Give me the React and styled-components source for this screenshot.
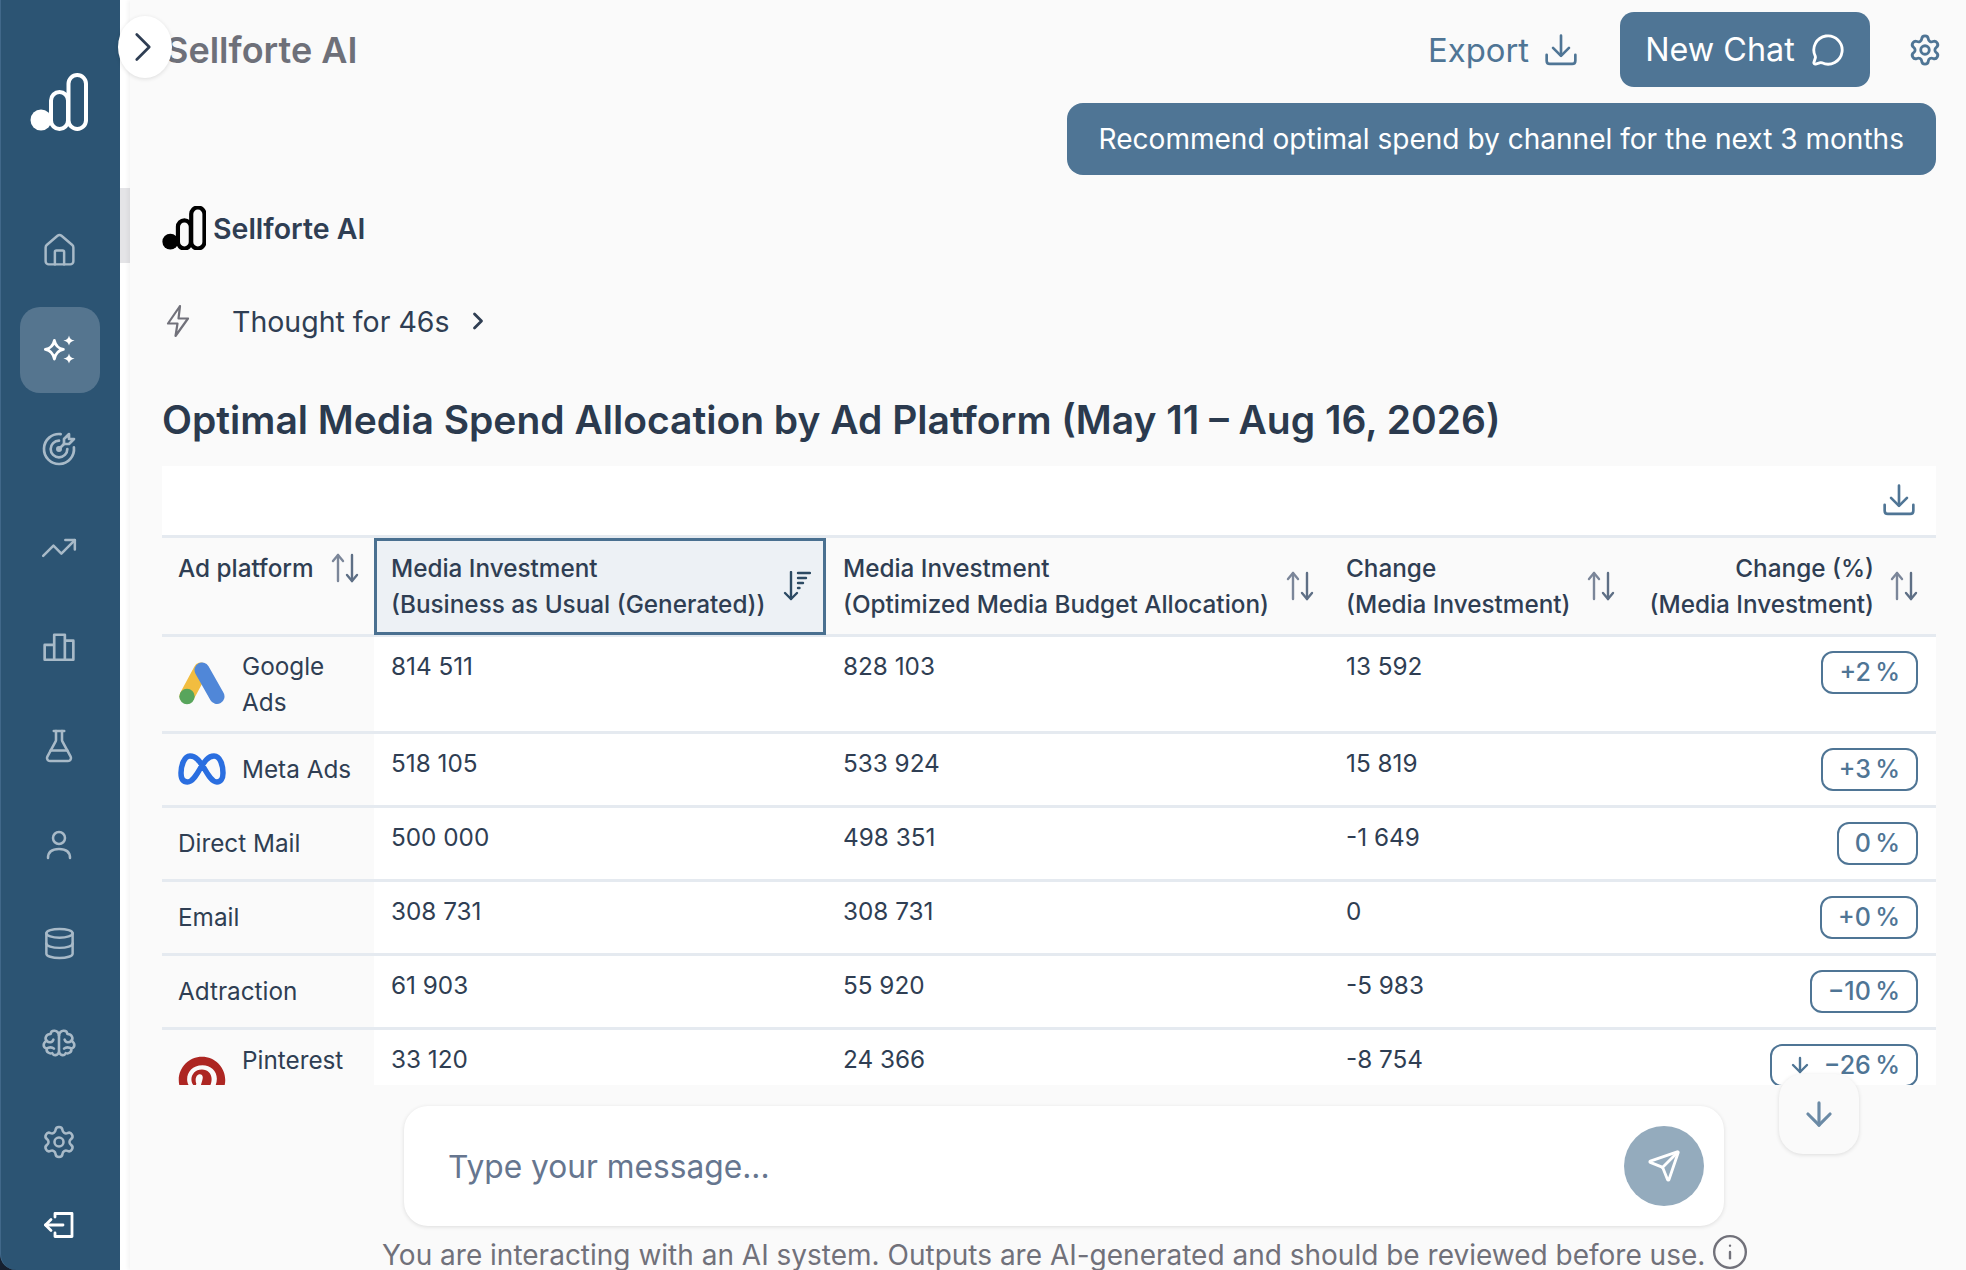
import React from 'react';
import styled, { createGlobalStyle } from 'styled-components';
import {
  House,
  TrendingUp,
  FlaskConical,
  Database,
  Settings,
  MessageCircle,
  Send,
  ChevronRight,
  ArrowDown,
  Info,
} from 'lucide-react';
import { TbTargetArrow } from 'react-icons/tb';
import { FaPinterest } from 'react-icons/fa';

const GlobalStyle = createGlobalStyle`
  html, body {
    margin: 0;
    padding: 0;
    background: #fff;
    font-family: Inter, "Liberation Sans", sans-serif;
  }
  * { box-sizing: border-box; }
`;

const Page = styled.div`
  display: flex;
  width: 1966px;
  height: 1270px;
  overflow: hidden;
  background: #fff;
`;

const SidebarShell = styled.div`
  width: 120px;
  flex-shrink: 0;
  background: #16202f;
`;

const Sidebar = styled.aside`
  display: flex;
  flex-direction: column;
  align-items: center;
  height: 100%;
  padding-top: 73px;
  background: #2c5473;
  border-left: 1px solid #41688a;
  border-bottom-left-radius: 16px;
`;

const SideLogo = styled.div`
  height: 58px;
  margin-bottom: 70px;
  margin-left: -4px;
  color: #fff;
`;

const NavItem = styled.div`
  display: flex;
  align-items: center;
  justify-content: center;
  width: 80px;
  height: ${(p) => (p.$exit ? 68 : 99)}px;
  color: ${(p) => (p.$light ? '#fff' : '#a8bac8')};
  margin-left: ${(p) => (p.$active ? -1 : -3)}px;
`;

const ActiveBox = styled.div`
  display: flex;
  align-items: center;
  justify-content: center;
  width: 80px;
  height: 86px;
  border-radius: 20px;
  background: #55758f;
`;

const Gutter = styled.div`
  width: 10px;
  flex-shrink: 0;
  padding-top: 188px;
`;

const GutterBand = styled.div`
  height: 75px;
  background: #e4e4e7;
`;

const Main = styled.main`
  position: relative;
  flex: 1;
  min-width: 0;
  display: flex;
  flex-direction: column;
  background: #fafafa;
  box-shadow: -2px 0 4px rgba(0, 0, 0, 0.05);
`;

const ToggleButton = styled.button`
  position: absolute;
  left: -12px;
  top: 16px;
  width: 54px;
  height: 62px;
  padding: 0 4px 0 0;
  display: flex;
  align-items: center;
  justify-content: center;
  border: 0;
  border-radius: 50%;
  background: #fff;
  color: #2f3e53;
  box-shadow: 0 1px 4px rgba(0, 0, 0, 0.12);
`;

const Header = styled.header`
  display: flex;
  align-items: center;
  justify-content: space-between;
  height: 87px;
  padding: 12px 24px 0 35px;
  margin-bottom: 16px;
  flex-shrink: 0;
`;

const AppTitle = styled.h1`
  margin: 0;
  font-size: 36px;
  font-weight: 600;
  color: #6e7079;
`;

const HeaderActions = styled.div`
  display: flex;
  align-items: center;
`;

const ExportLink = styled.div`
  display: flex;
  align-items: center;
  gap: 15px;
  margin-right: 42px;
  font-size: 32.8px;
  color: #4f7595;
`;

const NewChatButton = styled.button`
  display: flex;
  align-items: center;
  justify-content: center;
  gap: 16px;
  width: 250px;
  height: 75px;
  border: 0;
  border-radius: 14px;
  background: #4f7595;
  color: #fff;
  font-family: inherit;
  font-size: 32.3px;
  margin-right: 38px;
`;

const GearLink = styled.div`
  display: flex;
  color: #4f7595;
`;

const ChatArea = styled.section`
  flex: 1;
  min-height: 0;
  overflow: hidden;
  padding: 0 30px 0 32px;
`;

const UserBubble = styled.div`
  width: fit-content;
  margin-left: auto;
  height: 72px;
  padding: 0 32px;
  display: flex;
  align-items: center;
  border-radius: 16px;
  background: #4f7595;
  color: #fff;
  font-size: 28.05px;
`;

const AnswerHead = styled.div`
  display: flex;
  align-items: center;
  gap: 7px;
  height: 44px;
  margin-top: 31px;
  color: #000;
  font-size: 28.5px;
  font-weight: 600;
  span {
    color: #2f3e53;
  }
`;

const ThoughtRow = styled.div`
  display: flex;
  align-items: center;
  height: 40px;
  margin-top: 51px;
  color: #2f3e53;
  font-size: 28.5px;
  svg:first-child {
    margin-left: 4px;
    margin-right: 42px;
  }
  svg:last-child {
    margin-left: 14px;
  }
`;

const Heading = styled.h2`
  margin: 47px 0 0 0;
  height: 64px;
  line-height: 64px;
  font-size: 39px;
  font-weight: 600;
  color: #2b3a4e;
`;

const TableCard = styled.div`
  margin-top: 14px;
  background: #fff;
`;

const TableTools = styled.div`
  display: flex;
  align-items: center;
  justify-content: flex-end;
  height: 71.5px;
  padding: 0 20px 0 0;
  color: #4f7595;
  border-bottom: 3px solid #e5eaf0;
`;

const Table = styled.table`
  width: 1774px;
  table-layout: fixed;
  border-collapse: collapse;
  font-size: 24.3px;
  line-height: 36px;
  color: #2f3e53;
`;

const HeadCell = styled.th`
  padding: 12px ${(p) => (p.$last ? 18 : 15)}px 12px ${(p) => (p.$first ? 16 : 17)}px;
  height: 97px;
  vertical-align: top;
  font-weight: 500;
  text-align: ${(p) => (p.$right ? 'right' : 'left')};
  background: ${(p) => (p.$sorted ? '#edf1f5' : '#fafafa')};
  border-bottom: 3px solid #e5eaf0;
  outline: ${(p) => (p.$sorted ? '3px solid #4a7090' : 'none')};
  outline-offset: -3px;
`;

const HeadInner = styled.div`
  display: flex;
  align-items: center;
  justify-content: space-between;
  gap: 16px;
`;

const HeadLabel = styled.div`
  flex: 1;
  white-space: nowrap;
`;

const Row = styled.tr`
  border-bottom: 3px solid #e5eaf0;
`;

const NameCell = styled.td`
  padding: ${(p) => (p.$top ? '12px 12px 0 16px' : '0 12px 0 16px')};
  height: ${(p) => p.$h}px;
  vertical-align: ${(p) => (p.$top ? 'top' : 'middle')};
  background: #fafafa;
`;

const NameInner = styled.div`
  display: flex;
  align-items: ${(p) => (p.$top ? 'flex-start' : 'center')};
  gap: 16px;
`;

const ValueCell = styled.td`
  padding: 11px 16px 0 17px;
  vertical-align: top;
`;

const BadgeCell = styled.td`
  padding: 14px 18px 0 0;
  vertical-align: top;
  text-align: right;
`;

const Badge = styled.span`
  display: inline-flex;
  align-items: center;
  gap: 12px;
  height: 43px;
  padding: 0 16px;
  border: 2px solid #4f7595;
  border-radius: 12px;
  color: #4f7595;
  font-size: 25px;
  font-weight: 500;
`;

const Footer = styled.footer`
  flex-shrink: 0;
  height: 185px;
  padding: 21px 0 0 252px;
`;

const MessageBox = styled.div`
  display: flex;
  align-items: center;
  justify-content: space-between;
  width: 1320px;
  height: 120px;
  margin-left: 22px;
  padding: 0 20px 0 44px;
  border-radius: 24px;
  background: #fff;
  box-shadow: 0 1px 4px rgba(0, 0, 0, 0.12);
`;

const Placeholder = styled.div`
  font-size: 31.7px;
  color: #66768f;
`;

const SendButton = styled.div`
  display: flex;
  align-items: center;
  justify-content: center;
  width: 80px;
  height: 80px;
  border-radius: 50%;
  background: #94abbd;
  color: #fff;
`;

const Disclaimer = styled.div`
  display: flex;
  align-items: center;
  gap: 6px;
  margin-top: 12px;
  font-size: 28px;
  white-space: nowrap;
  color: #71717a;
  svg {
    margin-top: -6px;
  }
`;

const ScrollDown = styled.div`
  position: absolute;
  left: 1649px;
  top: 1074px;
  display: flex;
  align-items: center;
  justify-content: center;
  width: 80px;
  height: 80px;
  border-radius: 24px;
  background: #fafafa;
  color: #6b8aa5;
  box-shadow: 0 1px 4px rgba(0, 0, 0, 0.12);
`;

const BrandMark = ({ size = 58, filled = 'currentColor', stroke = 4 }) => (
  <svg width={size} height={size} viewBox="0 0 58 58" fill="none">
    <circle cx="11" cy="47" r="10.5" fill={filled} />
    <rect x="21" y="19" width="17" height="37" rx="8.5" stroke={filled} strokeWidth={stroke} />
    <rect x="38.500" y="2" width="17.500" height="54" rx="8.700" stroke={filled} strokeWidth={stroke} />
  </svg>
);

const SparkIcon = () => (
  <svg width="36" height="36" viewBox="0 0 32 32">
    <path d="M11 7.500 C12 12 14 14.500 19 15.500 C14 16.500 12 19 11 24 C10 19 8 16.500 3 15.500 C8 14.500 10 12 11 7.500 Z" fill="none" stroke="#fff" strokeWidth="2.500" strokeLinejoin="round" />
    <path d="M24 3 C24.500 5.500 26 7 29 7.500 C26 8 24.500 9.500 24 12 C23.500 9.500 22 8 19 7.500 C22 7 23.500 5.500 24 3 Z" fill="#fff" />
    <path d="M24 19 C24.500 21.500 26 23 29 23.500 C26 24 24.500 25.500 24 28 C23.500 25.500 22 24 19 23.500 C22 23 23.500 21.500 24 19 Z" fill="#fff" />
  </svg>
);

const BoltIcon = () => (
  <svg width="24" height="34" viewBox="0 0 24 34" fill="none" stroke="#71717a" strokeWidth="2.200" strokeLinejoin="round" strokeLinecap="round">
    <path d="M14 2 L2 19.500 H11.500 L9.500 32 L22 14.500 H12.500 Z" />
  </svg>
);

const PodiumIcon = () => (
  <svg width="34" height="34" viewBox="0 0 32 32" fill="none" stroke="currentColor" strokeWidth="2.500" strokeLinejoin="round">
    <path d="M11.500 28 V4.500 H21.500 V28" />
    <path d="M11.500 14 H2.500 V28 H29.500 V10 H21.500" />
  </svg>
);

const PersonIcon = () => (
  <svg width="32" height="32" viewBox="0 0 32 32" fill="none" stroke="currentColor" strokeWidth="2.500" strokeLinecap="round">
    <circle cx="16" cy="9" r="6" />
    <path d="M5 29 C5 23 9 20 16 20 C23 20 27 23 27 29" />
  </svg>
);

const BrainIcon = () => (
  <svg width="36" height="36" viewBox="0 0 32 32" fill="none" stroke="currentColor" strokeWidth="2.300" strokeLinecap="round" strokeLinejoin="round">
    <path d="M16 9 C15 4 9 4 8.500 8 C4.500 8 3 12 5 14 C1.500 16 1.500 20 5 21 C4.500 24 7.500 26 10 25 C11 27.500 15 27.500 16 24 C17 27.500 21 27.500 22 25 C24.500 26 27.500 24 27 21 C30.500 20 30.500 16 27 14 C29 12 27.500 8 23.500 8 C23 4 17 4 16 9 Z" />
    <path d="M16 9 V24" />
    <path d="M5 14 C7 16 10 16 11 13" />
    <path d="M27 14 C25 16 22 16 21 13" />
    <path d="M5 21 C7 19.500 10 19.500 11.500 21" />
    <path d="M27 21 C25 19.500 22 19.500 20.500 21" />
  </svg>
);

const ExitIcon = () => (
  <svg width="34" height="32" viewBox="0 0 32 32" fill="none" stroke="#fff" strokeWidth="2.800" strokeLinecap="round" strokeLinejoin="round">
    <path d="M12 8 V4.500 H29 V27.500 H12 V24" />
    <path d="M20 16 H2.500" />
    <path d="M8 10.500 L2.500 16 L8 21.500" />
  </svg>
);

const TrayDownload = ({ size = 34 }) => (
  <svg width={size} height={size} viewBox="0 0 32 32" fill="none" stroke="currentColor" strokeWidth="2.500" strokeLinecap="round" strokeLinejoin="round">
    <path d="M16 2.500 V21" />
    <path d="M8.500 14 L16 21.500 L23.500 14" />
    <path d="M2.500 20.500 V26 C2.500 28 3.500 29 5.500 29 H26.500 C28.500 29 29.500 28 29.500 26 V20.500" />
  </svg>
);

const SortIcon = () => (
  <svg width="28" height="30" viewBox="0 0 28 30" fill="none" strokeWidth="2.400" strokeLinecap="round" strokeLinejoin="round" style={{ flexShrink: 0 }}>
    <g stroke="#7b8699">
      <path d="M7 28 V2" />
      <path d="M2 8 L7 2 L12 8" />
    </g>
    <g stroke="#5e6f85">
      <path d="M21 2 V28" />
      <path d="M16 22 L21 28 L26 22" />
    </g>
  </svg>
);

const SortedIcon = () => (
  <svg width="28" height="30" viewBox="0 0 28 30" fill="none" stroke="#2c4a63" strokeWidth="2.400" strokeLinecap="round" strokeLinejoin="round" style={{ flexShrink: 0 }}>
    <path d="M8 1 V28" />
    <path d="M2 22 L8 28 L14 22" />
    <path d="M15 2 H27" />
    <path d="M15 7 H23" />
    <path d="M15 12 H20" />
    <path d="M15 17 H16.500" />
  </svg>
);

const GoogleAdsLogo = () => (
  <svg width="48" height="44" viewBox="0 0 48 44" style={{ flexShrink: 0 }}>
    <path d="M9 34 L23 8" stroke="#f2bd40" strokeWidth="15" strokeLinecap="round" fill="none" />
    <path d="M24 8 L39 34.500" stroke="#5087d8" strokeWidth="15" strokeLinecap="round" fill="none" />
    <circle cx="9" cy="34.500" r="7.700" fill="#58a55c" />
  </svg>
);

const MetaLogo = () => (
  <svg width="48" height="34" viewBox="0 0 48 34" fill="none" stroke="#2a6ee0" strokeWidth="5.500" style={{ flexShrink: 0 }}>
    <path d="M12 4 C6 4 3 14 3 21 C3 27 5.500 30 9.500 30 C14.500 30 18.500 23 22.500 16 C26.500 9.500 30 4 36 4 C42.500 4 45 14 45 21 C45 27 42.500 30 39 30 C34 30 30 23 26 16 C21 8.500 18 4 12 4 Z" />
  </svg>
);

const PinterestLogo = styled(FaPinterest)`
  flex-shrink: 0;
  font-size: 48px;
  color: #ad2622;
  margin-top: 14px;
`;

const navIcons = [
  <House key="home" size={37} strokeWidth={1.6} />,
  null,
  <TbTargetArrow key="target" size={40} strokeWidth={1.6} />,
  <TrendingUp key="trend" size={38} strokeWidth={1.6} />,
  <PodiumIcon key="podium" />,
  <FlaskConical key="flask" size={36} strokeWidth={1.7} />,
  <PersonIcon key="person" />,
  <Database key="db" size={35} strokeWidth={1.7} />,
  <BrainIcon key="brain" />,
  <Settings key="settings" size={36} strokeWidth={1.7} />,
];

const rows = [
  { name: 'Google Ads', logo: <GoogleAdsLogo />, h: 97, a: '814 511', b: '828 103', c: '13 592', pct: '+2\u202f%' },
  { name: 'Meta Ads', logo: <MetaLogo />, h: 74, a: '518 105', b: '533 924', c: '15 819', pct: '+3\u202f%' },
  { name: 'Direct Mail', h: 74, a: '500 000', b: '498 351', c: '-1 649', pct: '0\u202f%' },
  { name: 'Email', h: 74, a: '308 731', b: '308 731', c: '0', pct: '+0\u202f%' },
  { name: 'Adtraction', h: 74, a: '61 903', b: '55 920', c: '-5 983', pct: '−10\u202f%' },
  { name: 'Pinterest', logo: <PinterestLogo />, h: 97, top: true, a: '33 120', b: '24 366', c: '-8 754', pct: '−26\u202f%', down: true },
];

const App = () => (
  <Page>
    <GlobalStyle />
    <SidebarShell>
      <Sidebar>
        <SideLogo><BrandMark /></SideLogo>
        {navIcons.map((icon, i) => (
          icon
            ? <NavItem key={i}>{icon}</NavItem>
            : <NavItem key={i} $light $active><ActiveBox><SparkIcon /></ActiveBox></NavItem>
        ))}
        <NavItem $exit $light><ExitIcon /></NavItem>
      </Sidebar>
    </SidebarShell>
    <Gutter><GutterBand /></Gutter>
    <Main>
      <ToggleButton aria-label="Toggle sidebar"><ChevronRight size={54} strokeWidth={1.300} /></ToggleButton>
      <Header>
        <AppTitle>Sellforte AI</AppTitle>
        <HeaderActions>
          <ExportLink>Export <TrayDownload /></ExportLink>
          <NewChatButton>New Chat <MessageCircle size={34} strokeWidth={2} /></NewChatButton>
          <GearLink><Settings size={34} strokeWidth={2} /></GearLink>
        </HeaderActions>
      </Header>
      <ChatArea>
        <UserBubble>Recommend optimal spend by channel for the next 3 months</UserBubble>
        <AnswerHead><BrandMark size={44} filled="#000" stroke={5.500} /><span>Sellforte AI</span></AnswerHead>
        <ThoughtRow>
          <BoltIcon />
          Thought for 46s
          <ChevronRight size={28} strokeWidth={2.400} />
        </ThoughtRow>
        <Heading>Optimal Media Spend Allocation by Ad Platform (May 11 – Aug 16, 2026)</Heading>
        <TableCard>
          <TableTools><TrayDownload /></TableTools>
          <Table>
            <colgroup>
              <col style={{ width: 212 }} />
              <col style={{ width: 452 }} />
              <col style={{ width: 503 }} />
              <col style={{ width: 301 }} />
              <col style={{ width: 306 }} />
            </colgroup>
            <thead>
              <tr>
                <HeadCell $first>
                  <HeadInner><HeadLabel>Ad platform</HeadLabel><SortIcon /></HeadInner>
                </HeadCell>
                <HeadCell $sorted>
                  <HeadInner>
                    <HeadLabel>Media Investment<br />(Business as Usual (Generated))</HeadLabel>
                    <SortedIcon />
                  </HeadInner>
                </HeadCell>
                <HeadCell>
                  <HeadInner>
                    <HeadLabel>Media Investment<br />(Optimized Media Budget Allocation)</HeadLabel>
                    <SortIcon />
                  </HeadInner>
                </HeadCell>
                <HeadCell>
                  <HeadInner>
                    <HeadLabel>Change<br />(Media Investment)</HeadLabel>
                    <SortIcon />
                  </HeadInner>
                </HeadCell>
                <HeadCell $right $last>
                  <HeadInner>
                    <HeadLabel>Change (%)<br />(Media Investment)</HeadLabel>
                    <SortIcon />
                  </HeadInner>
                </HeadCell>
              </tr>
            </thead>
            <tbody>
              {rows.map((row) => (
                <Row key={row.name}>
                  <NameCell $h={row.h} $top={row.top}>
                    <NameInner $top={row.top}>{row.logo}<div>{row.name}</div></NameInner>
                  </NameCell>
                  <ValueCell>{row.a}</ValueCell>
                  <ValueCell>{row.b}</ValueCell>
                  <ValueCell>{row.c}</ValueCell>
                  <BadgeCell>
                    <Badge>{row.down && <ArrowDown size={24} strokeWidth={2.400} />}{row.pct}</Badge>
                  </BadgeCell>
                </Row>
              ))}
            </tbody>
          </Table>
        </TableCard>
      </ChatArea>
      <ScrollDown><ArrowDown size={38} strokeWidth={2} /></ScrollDown>
      <Footer>
        <MessageBox>
          <Placeholder>Type your message...</Placeholder>
          <SendButton><Send size={34} strokeWidth={2} /></SendButton>
        </MessageBox>
        <Disclaimer>
          You are interacting with an AI system. Outputs are AI-generated and should be reviewed before use.
          <Info size={38} strokeWidth={1.500} />
        </Disclaimer>
      </Footer>
    </Main>
  </Page>
);

export default App;
